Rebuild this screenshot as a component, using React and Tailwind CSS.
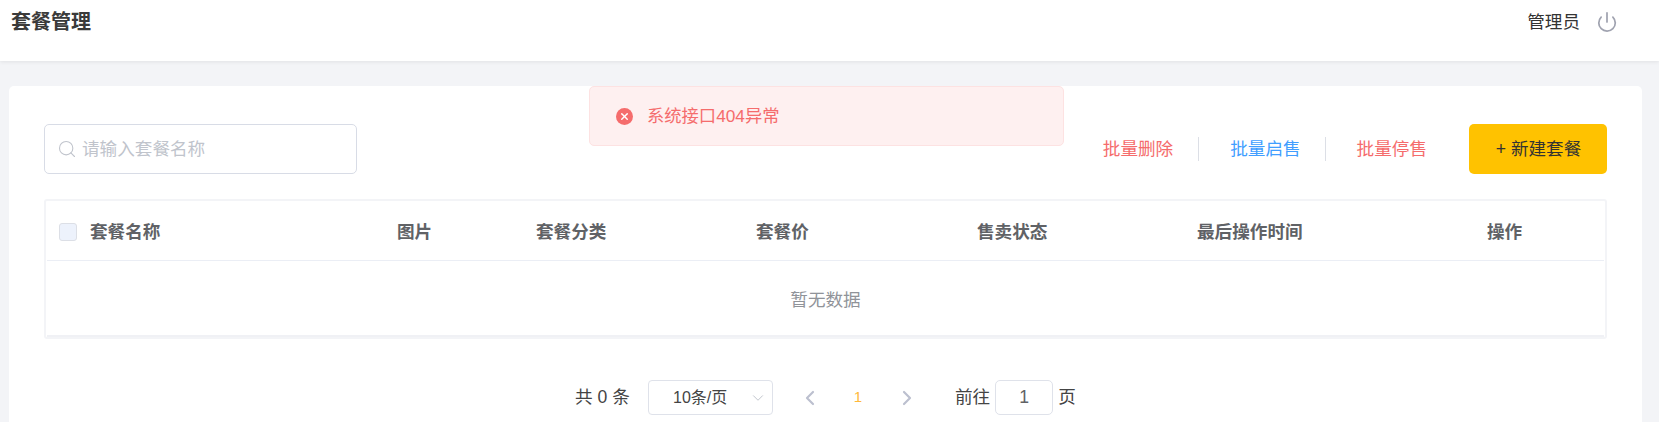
import { ChevronDown, ChevronLeft, ChevronRight, Power, Search, X } from 'lucide-react';

const columns = ['图片', '套餐分类', '套餐价', '售卖状态', '最后操作时间', '操作'];

export default function App() {
  return (
    <div className="relative h-[422px] overflow-hidden bg-[#f3f4f7] font-['Liberation_Sans','Noto_Sans_CJK_SC',sans-serif] text-[17.6px] text-[#333]">
      {/* HEADER */}
      <div className="flex h-[61px] items-start justify-between bg-white pl-[11px] pr-[41px] shadow-[0_1px_4px_rgba(0,0,0,0.08)]">
        <div className="mt-[9px] text-[20px] leading-[26px] font-bold text-[#3a3a3a]">套餐管理</div>
        <div className="mt-[10px] flex items-center gap-[16px] leading-6">
          <span>管理员</span>
          <Power size={22} strokeWidth={1.9} className="text-[#a0a3b0]" />
        </div>
      </div>

      {/* CARD */}
      <div className="mt-[25px] mr-[17px] ml-[9px] h-[336px] rounded-t-[5px] bg-white px-[35px] pt-[38px]">
        <div className="flex h-[50px] items-center justify-between">
          <div className="flex h-[50px] w-[313px] items-center gap-[5px] rounded-[5px] border border-[#d8dce6] pl-[12px]">
            <Search size={20} strokeWidth={1.3} className="shrink-0 text-[#c0c4cc]" />
            <input
              placeholder="请输入套餐名称"
              className="w-full bg-transparent outline-none placeholder:text-[#c0c4cc]"
            />
          </div>

          <div className="flex items-center">
            <span className="text-[#f56c6c]">批量删除</span>
            <span className="mr-[31px] ml-[25px] h-6 w-px bg-[#dcdfe6]" />
            <span className="text-[#419eff]">批量启售</span>
            <span className="mr-[31px] ml-[24px] h-6 w-px bg-[#dcdfe6]" />
            <span className="text-[#f56c6c]">批量停售</span>
            <button className="ml-[42px] h-[50px] w-[138px] rounded-[5px] bg-[#ffc200] pl-px text-[#333]">
              + 新建套餐
            </button>
          </div>
        </div>

        {/* TABLE */}
        <div className="mt-[25px] h-[140px] rounded-[3px] border-2 border-[#f3f4f7] px-px">
          <div className="grid h-[60px] grid-cols-[350px_139px_220px_221px_220px_290px_1fr] items-center border-b border-[#ebeef5] pt-1 font-bold text-[#606266]">
            <div className="flex items-center gap-[13px] pl-3">
              <span className="h-[18px] w-[18px] rounded-[3px] border border-[#dcdfe6] bg-[#edf2fc]" />
              <span>套餐名称</span>
            </div>
            {columns.map((col) => (
              <div key={col}>{col}</div>
            ))}
          </div>
          <div className="flex h-[76px] items-center justify-center border-b-2 border-[#f0f1f5] pt-1 text-[#909399]">
            暂无数据
          </div>
        </div>

        {/* PAGINATION */}
        <div className="mt-[41px] flex h-[35px] items-center pl-[531px] text-[#444]">
          <span className="w-[73px]">共 0 条</span>
          <div className="relative flex h-[35px] w-[125px] items-center rounded-[4px] border border-[#dfe2ea] pl-[24px] text-[16px]">
            <span>10条/页</span>
            <ChevronDown size={18} strokeWidth={1.3} className="absolute right-[5px] text-[#c0c4cc]" />
          </div>
          <ChevronLeft size={24} strokeWidth={2.2} className="ml-[25px] text-[#bcc0cf]" />
          <span className="ml-[26px] w-[20px] text-center text-[15px] text-[#ffb93b]">1</span>
          <ChevronRight size={24} strokeWidth={2.2} className="ml-[27px] text-[#bcc0cf]" />
          <span className="ml-[36px]">前往</span>
          <div className="ml-[5px] flex h-[35px] w-[58px] items-center justify-center rounded-[5px] border border-[#dfe2ea] text-[#606266]">
            1
          </div>
          <span className="ml-[5px]">页</span>
        </div>
      </div>

      {/* MESSAGE */}
      <div className="absolute top-[86px] left-[589px] flex h-[60px] w-[475px] items-center rounded-[5px] border border-[#fde2e2] bg-[#fef0f0] pl-[26px] text-[17.3px] text-[#f56c6c]">
        <span className="flex h-[17px] w-[17px] items-center justify-center rounded-full bg-[#f56c6c]">
          <X size={11} strokeWidth={3} className="text-white" />
        </span>
        <span className="mt-[2px] ml-[14px]">系统接口404异常</span>
      </div>
    </div>
  );
}
